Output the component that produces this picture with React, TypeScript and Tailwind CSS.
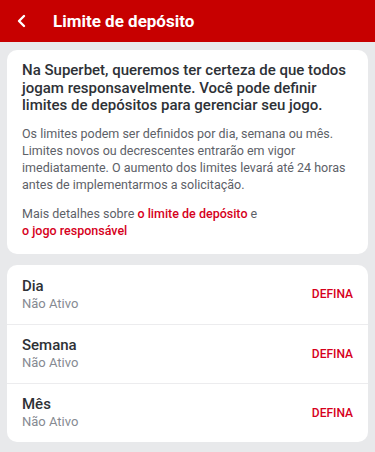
import React from "react";

const rows = ["Dia", "Semana", "Mês"];

export default function App() {
  return (
    <div
      className="w-[375px] h-[452px] bg-[#e8e9eb] overflow-hidden"
      style={{ fontFamily: "Roboto, 'Noto Sans', sans-serif" }}
    >
      <header className="h-[42px] bg-[#c70000] flex items-center">
        <div className="w-[53px] pl-[16px] flex items-center">
          <svg width="12" height="14" viewBox="0 0 12 14" fill="none">
            <path d="M8 2 L3 7 L8 12" stroke="white" strokeWidth="2.4" strokeLinecap="round" strokeLinejoin="round" />
          </svg>
        </div>
        <h1 className="text-white text-[17px] font-bold leading-none">Limite de depósito</h1>
      </header>

      <div className="px-[7px] pt-[8px] flex flex-col gap-[11px]">
        <section className="bg-white rounded-[10px] px-[15px] pt-[12px] pb-[15px]">
          <p className="text-[15px] leading-[17.5px] font-medium text-[#2e3136]">
            Na Superbet, queremos ter certeza de que todos jogam responsavelmente. Você pode definir limites de depósitos para gerenciar seu jogo.
          </p>
          <p className="mt-[10px] text-[12.5px] leading-[17px] text-[#5d6168]">
            Os limites podem ser definidos por dia, semana ou mês. Limites novos ou decrescentes entrarão em vigor imediatamente. O aumento dos limites levará até 24 horas antes de implementarmos a solicitação.
          </p>
          <p className="mt-[12px] text-[12.5px] leading-[17px] text-[#5d6168]">
            Mais detalhes sobre <span className="text-[#d6001c] font-medium">o limite de depósito</span> e
            <br />
            <span className="text-[#d6001c] font-medium">o jogo responsável</span>
          </p>
        </section>

        <section className="bg-white rounded-[10px] flex flex-col">
          {rows.map((r, i) => (
            <div
              key={r}
              className={`h-[59px] flex items-center justify-between pl-[15px] pr-[15px] ${i > 0 ? "border-t border-[#ececee]" : ""}`}
            >
              <div className="flex flex-col">
                <span className="text-[15px] leading-[18px] font-medium text-[#2e3136]">{r}</span>
                <span className="text-[13px] leading-[17px] text-[#868a92]">Não Ativo</span>
              </div>
              <span className="text-[12px] font-medium text-[#d6001c]">DEFINA</span>
            </div>
          ))}
        </section>
      </div>
    </div>
  );
}
